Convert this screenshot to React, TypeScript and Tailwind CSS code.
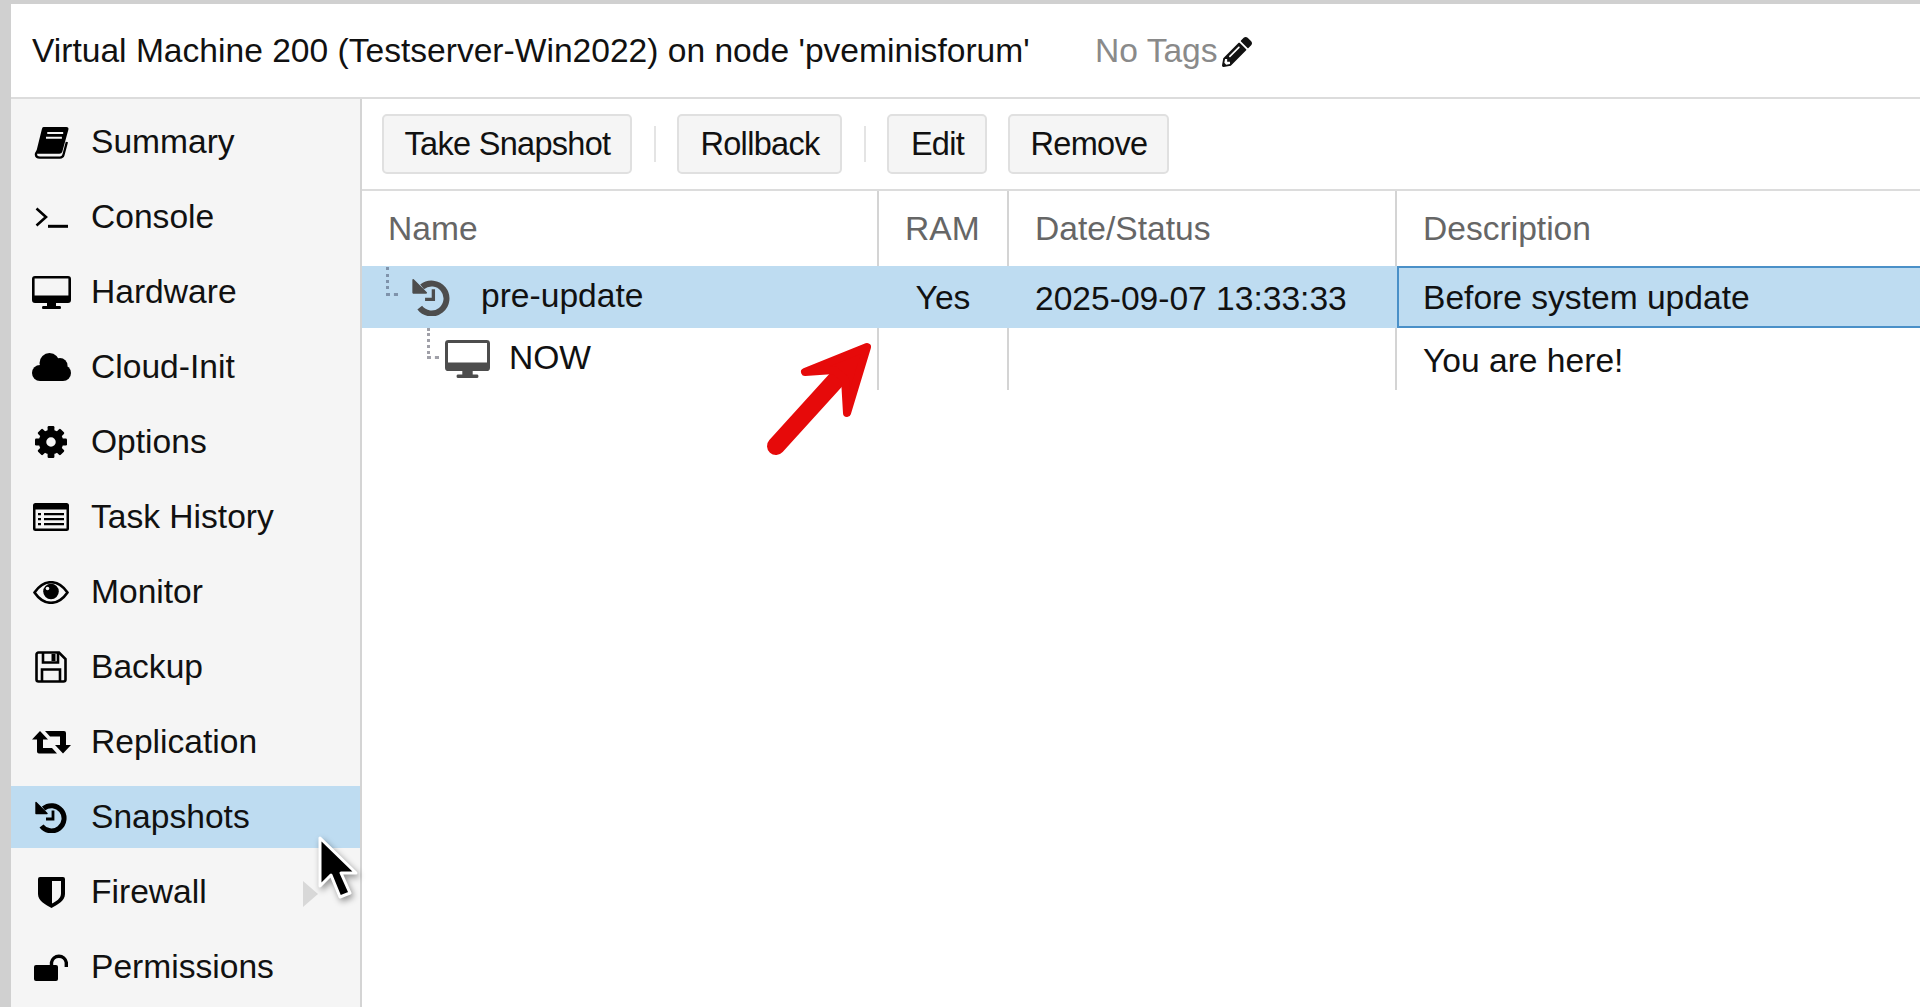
import React from "react";
import { FaPencilAlt } from "react-icons/fa";

const Book = () => (
  <svg width="35" height="33" viewBox="0 0 33 31">
    <path d="M9 1H30.5Q33 1 32.4 3.5L26.6 24.5Q26 26 24 26H3.5Q1.8 26 2.2 24L7.4 3Q7.8 1 9 1Z" fill="currentColor" />
    <path d="M4.5 23C1 25 .5 29.7 5.5 29.7H24.5Q27 29.7 27.7 27.5L31 15" fill="none" stroke="currentColor" strokeWidth="2.2" />
    <path d="M12.5 6.5H27.5M11.3 11H26.3" stroke="#f5f5f5" strokeWidth="2" />
  </svg>
);
const Terminal = () => (
  <svg width="33" height="21" viewBox="0 0 33 21" fill="none" stroke="currentColor" strokeWidth="2.6">
    <path d="M1.5 1.5L11 10L1.5 18.5" />
    <path d="M13 19.3H33" strokeWidth="3" />
  </svg>
);
const Monitor = ({ w = 39, h = 33 }: { w?: number; h?: number }) => (
  <svg width={w} height={h} viewBox="0 0 39 33">
    <path fillRule="evenodd" d="M3 0H36a3 3 0 0 1 3 3V24a3 3 0 0 1-3 3H3a3 3 0 0 1-3-3V3a3 3 0 0 1 3-3ZM2.6 2.6V19.5H36.4V2.6Z" fill="currentColor" />
    <path d="M15 27H24V30H28Q29 30 29 31.5T28 33H11Q10 33 10 31.5T11 30H15Z" fill="currentColor" />
  </svg>
);
const Cloud = () => (
  <svg width="39" height="28" viewBox="0 0 39 28" fill="currentColor">
    <circle cx="8" cy="20" r="8" />
    <circle cx="17.5" cy="10" r="10" />
    <circle cx="28" cy="12.5" r="7.5" />
    <circle cx="31" cy="20" r="8" />
    <rect x="8" y="14" width="23" height="14" />
  </svg>
);
const Cog = () => (
  <svg width="32" height="32" viewBox="0 0 32 32" fill="currentColor">
    <circle cx="16" cy="16" r="8.5" fill="none" stroke="currentColor" strokeWidth="7.5" />
    {[0, 45, 90, 135, 180, 225, 270, 315].map((a) => (
      <rect key={a} x="12.6" y="0" width="6.8" height="8" rx="1.2" transform={`rotate(${a} 16 16)`} />
    ))}
  </svg>
);
const ListAlt = () => (
  <svg width="36" height="28" viewBox="0 0 36 28" fill="currentColor">
    <path fillRule="evenodd" d="M2.5 0H33.5A2.5 2.5 0 0 1 36 2.5V25.5A2.5 2.5 0 0 1 33.5 28H2.5A2.5 2.5 0 0 1 0 25.5V2.5A2.5 2.5 0 0 1 2.5 0ZM2.5 6.5V25.5H33.5V6.5Z" />
    <path d="M5 10H8V12.3H5ZM11 10H31V12.3H11ZM5 15H8V17.3H5ZM11 15H31V17.3H11ZM5 20H8V22.3H5ZM11 20H31V22.3H11Z" />
  </svg>
);
const Eye = () => (
  <svg width="36" height="23" viewBox="0 0 36 23">
    <path d="M1.5 11.5C7 3.5 13 1.2 18 1.2S29 3.5 34.5 11.5C29 19.5 23 21.8 18 21.8S7 19.5 1.5 11.5Z" fill="none" stroke="currentColor" strokeWidth="2.6" />
    <circle cx="18" cy="10.5" r="7.8" fill="currentColor" />
    <circle cx="14.5" cy="7.5" r="1.8" fill="#f5f5f5" />
  </svg>
);
const Save = () => (
  <svg width="32" height="32" viewBox="0 0 32 32" fill="none" stroke="currentColor" strokeWidth="2.6">
    <path d="M3.5 1.5H24L30.5 8V28.5A2 2 0 0 1 28.5 30.5H3.5A2 2 0 0 1 1.5 28.5V3.5A2 2 0 0 1 3.5 1.5Z" />
    <path d="M8 1.5V11.5H23V1.5" />
    <path d="M7 30.5V18.5H25V30.5" />
    <rect x="16.5" y="3" width="4" height="7" fill="currentColor" stroke="none" />
  </svg>
);
const Retweet = () => (
  <svg width="39" height="24" viewBox="0 0 39 24" fill="currentColor">
    <path d="M8 1L16 9.5H11V18H20L25 23.5H7Q5 23.5 5 21.5V9.5H0Z" />
    <path d="M13 1H32Q34 1 34 3V15H39L31 23.5L23 15H28V6.5H18Z" />
  </svg>
);
const History = ({ s = 32 }: { s?: number }) => (
  <svg width={s} height={s} viewBox="0 0 32 32" fill="none" stroke="currentColor">
    <path d="M8.5 7.5A12.6 12.6 0 1 1 6.5 25" strokeWidth="5" />
    <path d="M1 1.5V12.5H12Z" fill="currentColor" strokeWidth="1.4" strokeLinejoin="round" />
    <path d="M18 9.5V18H11" strokeWidth="2.8" />
  </svg>
);
const Shield = () => (
  <svg width="27" height="31" viewBox="0 0 27 31" fill="currentColor">
    <path fillRule="evenodd" d="M2 0H25Q27 0 27 2V17C27 24 19 28 13.5 31C8 28 0 24 0 17V2Q0 0 2 0ZM14 4V26.5C18 24.5 23 21.5 23 16.5V4Z" />
  </svg>
);
const Unlock = () => (
  <svg width="34" height="28" viewBox="0 0 34 28">
    <rect x="0" y="12" width="24" height="16" rx="2" fill="currentColor" />
    <path d="M17.5 13V9.5A7.5 7.5 0 0 1 32.3 9.5V14" fill="none" stroke="currentColor" strokeWidth="3.4" />
  </svg>
);

const items: { label: string; icon: React.ReactNode; active?: boolean }[] = [
  { label: "Summary", icon: <Book /> },
  { label: "Console", icon: <Terminal /> },
  { label: "Hardware", icon: <Monitor /> },
  { label: "Cloud-Init", icon: <Cloud /> },
  { label: "Options", icon: <Cog /> },
  { label: "Task History", icon: <ListAlt /> },
  { label: "Monitor", icon: <Eye /> },
  { label: "Backup", icon: <Save /> },
  { label: "Replication", icon: <Retweet /> },
  { label: "Snapshots", icon: <History />, active: true },
  { label: "Firewall", icon: <Shield /> },
  { label: "Permissions", icon: <Unlock /> },
];

const Btn = ({ w, children }: { w: string; children: React.ReactNode }) => (
  <button className={`${w} h-[60px] rounded-[5px] border-2 border-[#e0e0e0] bg-[#f5f5f5] pl-[1px] text-[32.5px] tracking-[-0.7px] text-[#111] flex items-center justify-center`}>
    {children}
  </button>
);

const Sep = () => <div className="w-[2px] h-[36px] bg-[#e4e4e4]" />;

export default function App() {
  return (
    <div className="h-[1007px] w-[1920px] overflow-hidden bg-[#d0d0d0] pt-[4px] pl-[11px] font-['Liberation_Sans',Arial,sans-serif] relative">
      <div className="h-full bg-white flex flex-col">
        <div className="h-[95px] shrink-0 border-b-2 border-[#dcdcdc] flex items-center pl-[21px] pt-[2px] text-[33.6px] text-[#111]">
          <span className="w-[1063px] shrink-0">Virtual Machine 200 (Testserver-Win2022) on node 'pveminisforum'</span>
          <span className="text-[#8a8a8a]">No Tags</span>
          <FaPencilAlt size={30} className="ml-[4px] text-[#111]" />
        </div>
        <div className="flex flex-1 min-h-0">
          <div className="w-[351px] shrink-0 bg-[#f5f5f5] border-r-2 border-[#d4d4d4] pt-[12px] flex flex-col gap-[13px]">
            {items.map((it) => (
              <div key={it.label} className={`h-[62px] shrink-0 flex items-center text-[33.6px] text-[#111] ${it.active ? "bg-[#bedcf1]" : ""}`}>
                <div className="w-[81px] shrink-0 flex justify-center text-black"><span className="-ml-[1px]">{it.icon}</span></div>
                <span className="pt-[1px] -ml-[1px]">{it.label}</span>
              </div>
            ))}
          </div>
          <div className="flex-1 flex flex-col min-w-0">
            <div className="h-[92px] shrink-0 border-b-2 border-[#dcdcdc] flex items-center pl-[20px]">
              <Btn w="w-[250px]">Take Snapshot</Btn>
              <div className="w-[45px] flex justify-center"><Sep /></div>
              <Btn w="w-[165px]">Rollback</Btn>
              <div className="w-[45px] flex justify-center"><Sep /></div>
              <Btn w="w-[100px]">Edit</Btn>
              <div className="w-[21px]" />
              <Btn w="w-[161px]">Remove</Btn>
            </div>
            <div className="grid grid-cols-[517px_130px_388px_1fr] text-[33.6px] text-[#111]">
              <div className="h-[75px] flex items-center pl-[26px] pt-[2px] text-[#666] border-r-2 border-[#d4d4d4]">Name</div>
              <div className="h-[75px] flex items-center pl-[26px] pt-[2px] text-[#666] border-r-2 border-[#d4d4d4]">RAM</div>
              <div className="h-[75px] flex items-center pl-[26px] pt-[2px] text-[#666] border-r-2 border-[#d4d4d4]">Date/Status</div>
              <div className="h-[75px] flex items-center pl-[26px] pt-[2px] text-[#666]">Description</div>

              <div className="h-[62px] bg-[#bedcf1] flex items-center relative text-[#4d4d4d]">
                <span className="absolute left-[24px] top-[1px] w-[12px] h-[29px] border-l-[3px] border-b-[3px] border-dotted border-[#7f93ab]" />
                <span className="ml-[50px]"><History s={38} /></span>
                <span className="ml-[31px] pb-[2px] text-[#111]">pre-update</span>
              </div>
              <div className="h-[62px] bg-[#bedcf1] flex items-center justify-center pt-[2px] pr-[2px]">Yes</div>
              <div className="h-[62px] bg-[#bedcf1] flex items-center pl-[26px] pt-[4px]">2025-09-07 13:33:33</div>
              <div className="h-[62px] bg-[#bedcf1] flex items-center pl-[24px] pt-[2px] border-2 border-[#4a90c8] border-r-0">Before system update</div>

              <div className="h-[62px] flex items-center relative border-r-2 border-[#d4d4d4] text-[#4d4d4d]">
                <span className="absolute left-[65px] top-[0px] w-[12px] h-[31px] border-l-[3px] border-b-[3px] border-dotted border-[#a0a0a8]" />
                <span className="ml-[83px]"><Monitor w={45} h={40} /></span>
                <span className="ml-[19px] pb-[1px] text-[#111]">NOW</span>
              </div>
              <div className="h-[62px] border-r-2 border-[#d4d4d4]" />
              <div className="h-[62px] border-r-2 border-[#d4d4d4]" />
              <div className="h-[62px] flex items-center pl-[26px] pt-[4px]">You are here!</div>
            </div>
          </div>
        </div>
      </div>
      {/* red annotation arrow */}
      <svg className="absolute left-[760px] top-[335px]" width="125" height="125" viewBox="0 0 125 125" fill="none">
        <path d="M16 111L85 35" stroke="#e60a0a" strokeWidth="18" strokeLinecap="round" />
        <path d="M107 12L45 37L74 35L85 44L87 78Z" fill="#e60a0a" stroke="#e60a0a" strokeWidth="8" strokeLinejoin="round" />
      </svg>
      {/* submenu triangle + cursor */}
      <div className="absolute left-[303px] top-[881px] w-0 h-0 border-y-[13px] border-y-transparent border-l-[15px] border-l-[#d8d8d8]" />
      <svg className="absolute left-[312px] top-[832px]" width="48" height="76" viewBox="0 0 48 76" style={{ filter: "drop-shadow(2px 3px 3px rgba(0,0,0,.4))" }}>
        <path d="M8 6V54L19 43L28 65L38 61L29 41H44Z" fill="#000" stroke="#fff" strokeWidth="3" strokeLinejoin="round" />
      </svg>
    </div>
  );
}
